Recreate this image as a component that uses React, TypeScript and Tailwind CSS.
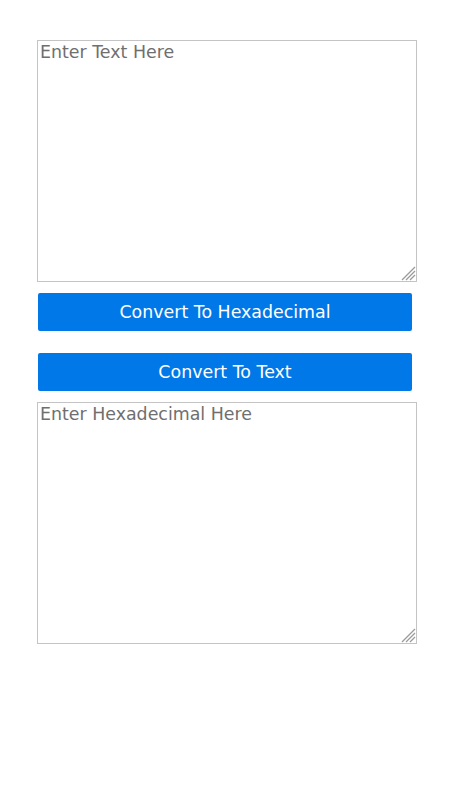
import React from "react";

function Grip() {
  return (
    <svg
      className="pointer-events-none absolute bottom-[1px] right-[1px]"
      width="16"
      height="16"
      viewBox="0 0 16 16"
    >
      <line x1="2" y1="15" x2="15" y2="2" stroke="#9a9a9a" strokeWidth="1.2" />
      <line x1="6" y1="15" x2="15" y2="6" stroke="#9a9a9a" strokeWidth="1.2" />
      <line x1="10" y1="15" x2="15" y2="10" stroke="#9a9a9a" strokeWidth="1.2" />
    </svg>
  );
}

function Area({ placeholder, className }: { placeholder: string; className?: string }) {
  return (
    <div className={"relative ml-[37px] h-[242px] w-[380px] " + (className ?? "")}>
      <textarea
        placeholder={placeholder}
        className="block h-full w-full resize-none border border-[#c4c4c4] px-[2px] pt-[1px] text-[17.4px] leading-[21px] text-[#333] placeholder:text-[#6f6f6f] outline-none"
        style={{ fontFamily: '"DejaVu Sans", sans-serif' }}
      />
      <Grip />
    </div>
  );
}

export default function App() {
  return (
    <div className="min-h-[800px] bg-white pt-[40px]" style={{ fontFamily: '"DejaVu Sans", sans-serif' }}>
      <div className="flex flex-col items-start">
        <Area placeholder="Enter Text Here" />
        <button className="ml-[38px] mt-[11px] h-[38px] w-[374px] rounded-[2px] bg-[#0078e7] text-[17.4px] text-white">
          Convert To Hexadecimal
        </button>
        <button className="ml-[38px] mt-[22px] h-[38px] w-[374px] rounded-[2px] bg-[#0078e7] text-[17.4px] text-white">
          Convert To Text
        </button>
        <Area placeholder="Enter Hexadecimal Here" className="mt-[11px]" />
      </div>
    </div>
  );
}
